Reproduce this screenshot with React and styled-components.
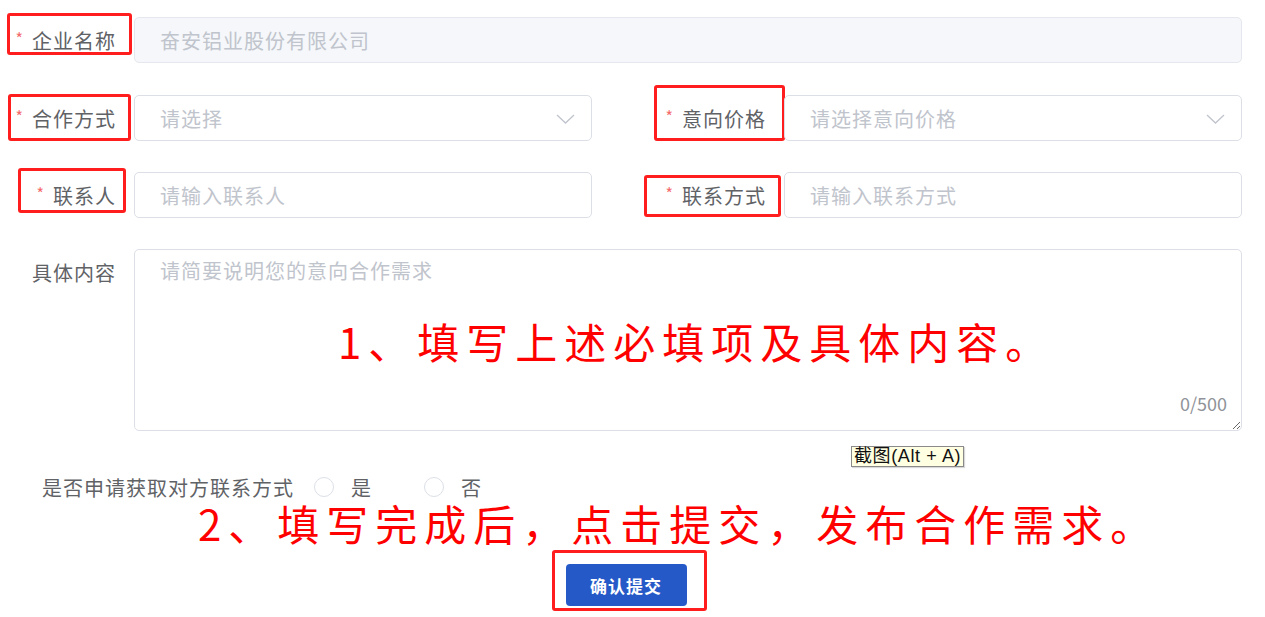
import React from "react";
import styled, { createGlobalStyle } from "styled-components";

const GlobalStyle = createGlobalStyle`
  body {
    margin: 0;
    background: #ffffff;
    font-family: "Noto Sans CJK SC", "Noto Sans", sans-serif;
  }
`;

const Page = styled.div`
  position: relative;
  width: 1242px;
  padding: 17px 23px 10px 0;
`;

const Form = styled.form`
  display: flex;
  flex-direction: column;
`;

const Row = styled.div`
  display: flex;
  align-items: ${(p) => (p.$top ? "flex-start" : "center")};
  margin-bottom: ${(p) => p.$gap || 0}px;
`;

const Grid = styled.div`
  display: grid;
  grid-template-columns: 592px 592px;
  column-gap: 58px;
  margin-bottom: ${(p) => p.$gap || 0}px;
`;

const Label = styled.label`
  position: relative;
  flex: 0 0 134px;
  box-sizing: border-box;
  height: 46px;
  padding-right: 18px;
  display: flex;
  align-items: center;
  justify-content: flex-end;
  font-size: 20px;
  letter-spacing: 1px;
  color: #606266;
  white-space: nowrap;
`;

const Star = styled.span`
  color: #f56c6c;
  font-size: 16px;
  margin-right: 9px;
  letter-spacing: 0;
  transform: translateY(-2px);
`;

const Mark = styled.span`
  position: absolute;
  left: ${(p) => p.$l}px;
  top: ${(p) => p.$t}px;
  width: ${(p) => p.$w}px;
  height: ${(p) => p.$h}px;
  box-sizing: border-box;
  border: 3px solid #ff1d1d;
  border-radius: 3px;
  pointer-events: none;
`;

const Field = styled.div`
  position: relative;
  flex: 1;
  display: flex;
`;

const Input = styled.input`
  width: 100%;
  height: 46px;
  box-sizing: border-box;
  padding: 0 25px;
  border: 1px solid ${(p) => (p.disabled ? "#e4e7ed" : "#dcdfe6")};
  border-radius: 5px;
  background: ${(p) => (p.disabled ? "#f5f7fa" : "#ffffff")};
  font-family: inherit;
  font-size: 20px;
  letter-spacing: 1px;
  color: #c0c4cc;
  outline: none;

  &::placeholder {
    color: #c0c4cc;
  }
  &:disabled {
    -webkit-text-fill-color: #c0c4cc;
  }
`;

const Chevron = styled.svg`
  position: absolute;
  right: 17px;
  top: 19px;
  width: 19px;
  height: 10px;
  pointer-events: none;
`;

const Area = styled.textarea`
  width: 100%;
  height: 182px;
  box-sizing: border-box;
  padding: 8px 25px;
  border: 1px solid #dcdfe6;
  border-radius: 5px;
  font-family: inherit;
  font-size: 20px;
  letter-spacing: 1px;
  line-height: 26px;
  resize: both;
  outline: none;

  &::placeholder {
    color: #c0c4cc;
  }
`;

const Count = styled.span`
  position: absolute;
  right: 15px;
  bottom: 15px;
  font-size: 18px;
  color: #909399;
`;

const Note = styled.div`
  font-size: 42px;
  font-weight: 400;
  line-height: 40px;
  letter-spacing: 7px;
  color: #ff0000;
  white-space: nowrap;
`;

const NoteOver = styled(Note)`
  position: absolute;
  left: 204px;
  top: 72px;
  pointer-events: none;
`;

const NoteBelow = styled(Note)`
  margin: -4px 0 0 198px;
  line-height: 36px;
`;

const Question = styled.div`
  display: flex;
  align-items: center;
  height: 44px;
  padding-left: 42px;
  margin-top: 34px;
  font-size: 20px;
  letter-spacing: 1px;
  color: #606266;
`;

const Radio = styled.label`
  display: flex;
  align-items: center;
  margin-left: ${(p) => p.$ml}px;

  &::before {
    content: "";
    width: 20px;
    height: 20px;
    box-sizing: border-box;
    border: 1px solid #dcdfe6;
    border-radius: 50%;
    margin-right: 17px;
  }
`;

const Footer = styled.div`
  display: flex;
  justify-content: center;
  margin-top: 23px;
  padding-left: 10px;
`;

const SubmitWrap = styled.div`
  position: relative;
  display: flex;
`;

const Submit = styled.button`
  width: 121px;
  height: 42px;
  border: none;
  border-radius: 4px;
  background: #2659c8;
  color: #ffffff;
  font-family: inherit;
  font-size: 17px;
  font-weight: 700;
  letter-spacing: 1px;
`;

const Tip = styled.div`
  position: absolute;
  left: 851px;
  top: 446px;
  padding: 0 2px;
  border: 1px solid #8a8a8a;
  background: #ffffe1;
  font-family: "Liberation Sans", "Noto Sans CJK SC", sans-serif;
  font-size: 18px;
  letter-spacing: 0.6px;
  line-height: 19px;
  color: #111;
  white-space: pre;
  box-shadow: 1px 1px 1px rgba(0, 0, 0, 0.15);
`;

function Arrow() {
  return (
    <Chevron viewBox="0 0 19 10">
      <path d="M1 1 L9.5 9 L18 1" fill="none" stroke="#c0c4cc" strokeWidth="1.3" />
    </Chevron>
  );
}

export default function App() {
  return (
    <>
      <GlobalStyle />
      <Page>
        <Form onSubmit={(e) => e.preventDefault()}>
          <Row $gap={32}>
            <Label>
              <Star>*</Star>企业名称
              <Mark $l={7} $t={-4} $w={125} $h={42} />
            </Label>
            <Field>
              <Input disabled value="奋安铝业股份有限公司" readOnly />
            </Field>
          </Row>

          <Grid $gap={31}>
            <Row>
              <Label>
                <Star>*</Star>合作方式
                <Mark $l={8} $t={-1} $w={123} $h={47} />
              </Label>
              <Field>
                <Input readOnly placeholder="请选择" />
                <Arrow />
              </Field>
            </Row>
            <Row>
              <Label>
                <Star>*</Star>意向价格
                <Mark $l={4} $t={-10} $w={131} $h={56} />
              </Label>
              <Field>
                <Input readOnly placeholder="请选择意向价格" />
                <Arrow />
              </Field>
            </Row>
          </Grid>

          <Grid $gap={31}>
            <Row>
              <Label>
                <Star>*</Star>联系人
                <Mark $l={18} $t={-4} $w={108} $h={45} />
              </Label>
              <Field>
                <Input placeholder="请输入联系人" />
              </Field>
            </Row>
            <Row>
              <Label>
                <Star>*</Star>联系方式
                <Mark $l={-6} $t={3} $w={137} $h={42} />
              </Label>
              <Field>
                <Input placeholder="请输入联系方式" />
              </Field>
            </Row>
          </Grid>

          <Row $top>
            <Label>具体内容</Label>
            <Field>
              <Area placeholder="请简要说明您的意向合作需求" />
              <Count>0/500</Count>
              <NoteOver>1、填写上述必填项及具体内容。</NoteOver>
            </Field>
          </Row>

          <Question>
            是否申请获取对方联系方式
            <Radio $ml={20}>是</Radio>
            <Radio $ml={52}>否</Radio>
          </Question>

          <NoteBelow>2、填写完成后，点击提交，发布合作需求。</NoteBelow>

          <Footer>
            <SubmitWrap>
              <Submit type="submit">确认提交</Submit>
              <Mark $l={-14} $t={-14} $w={155} $h={61} />
            </SubmitWrap>
          </Footer>
        </Form>
        <Tip>{"截图(Alt + A)"}</Tip>
      </Page>
    </>
  );
}
